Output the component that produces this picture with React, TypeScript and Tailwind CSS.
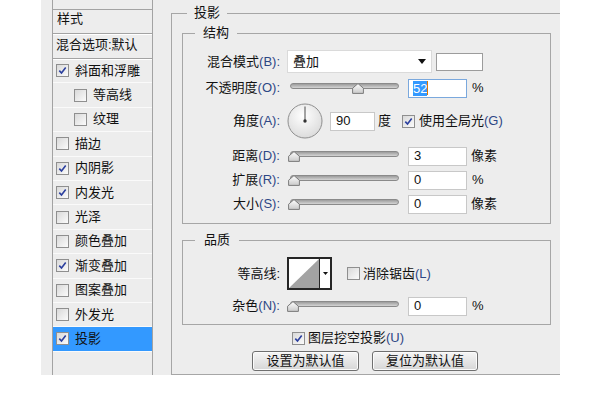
import React from 'react';

type Item = { t: string; c?: boolean; i?: boolean; a?: boolean };

const items: Item[] = [
  { t: '斜面和浮雕', c: true },
  { t: '等高线', i: true },
  { t: '纹理', i: true },
  { t: '描边' },
  { t: '内阴影', c: true },
  { t: '内发光', c: true },
  { t: '光泽' },
  { t: '颜色叠加' },
  { t: '渐变叠加', c: true },
  { t: '图案叠加' },
  { t: '外发光' },
  { t: '投影', c: true, a: true },
];

const M = ({ children }: { children: React.ReactNode }) => (
  <span className="text-[#2d4785]">{children}</span>
);

const Check = ({ checked, className = '' }: { checked?: boolean; className?: string }) => (
  <span
    className={`flex h-[13px] w-[13px] shrink-0 items-center justify-center border border-[#8f8f8f] bg-linear-to-br from-[#d9d9d9] to-[#fbfbfb] ${className}`}
  >
    {checked && (
      <svg width="9" height="9" viewBox="0 0 9 9">
        <path d="M1.3 4.6 L3.5 7 L7.7 1.6" fill="none" stroke="#2b3f9e" strokeWidth="1.6" />
      </svg>
    )}
  </span>
);

const Label = ({ children }: { children: React.ReactNode }) => (
  <span className="w-[97px] shrink-0 text-right">{children}</span>
);

const Slider = ({ thumb }: { thumb: string }) => (
  <div className="relative ml-[7px] h-[20px] w-[113px] shrink-0">
    <div className="absolute left-[3px] right-[1px] top-[5px] h-[6px] rounded-full border border-[#8a8a8a] bg-linear-to-b from-[#9c9c9c] to-[#d4d4d4]" />
    <svg className={`absolute top-[5px] ${thumb}`} width="12" height="11" viewBox="0 0 12 11">
      <defs>
        <linearGradient id="tg" x1="0" y1="0" x2="0" y2="1">
          <stop offset="0" stopColor="#ffffff" />
          <stop offset="1" stopColor="#c9c9c9" />
        </linearGradient>
      </defs>
      <path d="M6 0.6 L11.4 5.2 V10.4 H0.6 V5.2 Z" fill="url(#tg)" stroke="#7b7b7b" />
    </svg>
  </div>
);

const Field = ({ children, w = 'w-[59px]', ml = 'ml-[8px]' }: { children: React.ReactNode; w?: string; ml?: string }) => (
  <div className={`flex h-[19px] shrink-0 items-center border border-[#c8c8c8] bg-white pl-[5px] ${w} ${ml}`}>
    {children}
  </div>
);

const Button = ({ children, w }: { children: React.ReactNode; w: string }) => (
  <div
    className={`flex h-[20px] items-center justify-center rounded-[3px] border border-[#6f6f6f] bg-linear-to-b from-[#f6f6f6] to-[#d6d6d6] shadow-[inset_0_0_0_1px_#fbfbfb] ${w}`}
  >
    {children}
  </div>
);

const LeftPanel = () => (
  <div className="ml-[11px] flex w-[101px] shrink-0 flex-col border-x border-[#a3a3a3]">
    <div className="h-[9px]" />
    <div className="h-[25px] border-y border-[#a3a3a3] pl-[4px]">样式</div>
    <div className="h-[25px] border-b border-[#a3a3a3] pl-[3px] pt-[2px] shadow-[inset_0_1px_0_#fff]">混合选项:默认</div>
    <div className="shadow-[inset_0_1px_0_#fff]">
      {items.map((it) => (
        <div
          key={it.t}
          className={`flex h-[24.4px] items-center gap-[6px] border-b border-[#fafafa] ${it.i ? 'pl-[21px]' : 'pl-[3px]'} ${it.a ? 'bg-[#3399ff]' : ''}`}
        >
          <Check checked={it.c} />
          <span>{it.t}</span>
        </div>
      ))}
    </div>
  </div>
);

export default function App() {
  return (
    <div className="flex h-[395px] w-[595px] bg-white font-['Liberation_Sans','Noto_Sans_CJK_SC',sans-serif] text-[13px] leading-[18px] text-[#111]">
      <div className="ml-[41px] flex h-[375px] w-[519px] overflow-hidden bg-[#ededed]">
        <LeftPanel />

        {/* 投影 */}
        <fieldset className="ml-[18px] mt-[4px] w-[400px] shrink-0 border border-[#a6a6a6] p-0">
          <legend className="ml-[15px] px-[7px] leading-[18px]">投影</legend>
          <div className="pb-[12px] pl-[10px] pt-[2px]">
            {/* 结构 */}
            <fieldset className="w-[369px] border border-[#a6a6a6] p-0">
              <legend className="ml-[12px] px-[8px] leading-[18px]">结构</legend>
              <div className="pb-[9px] pt-[7px]">
                <div className="flex h-[25px] items-center">
                  <Label>混合模式<M>(B):</M></Label>
                  <div className="ml-[7px] flex h-[23px] w-[145px] shrink-0 items-center justify-between border border-[#dadada] bg-white pl-[5px] pr-[5px]">
                    <span>叠加</span>
                    <svg width="8" height="5" viewBox="0 0 8 5">
                      <path d="M0 0 H8 L4 5 Z" fill="#111" />
                    </svg>
                  </div>
                  <div className="ml-[4px] h-[18px] w-[47px] shrink-0 border border-[#9c9c9c] bg-white" />
                </div>

                <div className="mt-[4px] flex h-[20px] items-center">
                  <Label>不透明度<M>(O):</M></Label>
                  <Slider thumb="left-[65px]" />
                  <div className="ml-[8px] flex h-[19px] w-[59px] shrink-0 items-center border border-[#7aa8dd] bg-white pl-[4px]">
                    <span className="bg-[#3399ff] leading-[15px] text-white">52</span>
                    <span className="h-[14px] w-px bg-[#e07800]" />
                  </div>
                  <span className="ml-[5px]">%</span>
                </div>

                <div className="mt-[5px] flex h-[36px] items-center">
                  <Label>角度<M>(A):</M></Label>
                  <svg className="ml-[7px] shrink-0" width="36" height="36" viewBox="0 0 36 36">
                    <defs>
                      <radialGradient id="dg" cx="45%" cy="35%" r="70%">
                        <stop offset="0" stopColor="#ffffff" />
                        <stop offset="1" stopColor="#d9d9d9" />
                      </radialGradient>
                    </defs>
                    <circle cx="18" cy="18" r="17" fill="url(#dg)" stroke="#8f8f8f" />
                    <line x1="18" y1="18" x2="18" y2="3.5" stroke="#4a4a4a" />
                    <circle cx="18" cy="18" r="1.7" fill="#333" />
                  </svg>
                  <Field w="w-[45px]" ml="ml-[7px]">90</Field>
                  <span className="ml-[3px]">度</span>
                  <Check checked className="ml-[11px]" />
                  <span className="ml-[4px]">使用全局光<M>(G)</M></span>
                </div>

                <div className="mt-[7px] flex h-[20px] items-center">
                  <Label>距离<M>(D):</M></Label>
                  <Slider thumb="left-[1px]" />
                  <Field>3</Field>
                  <span className="ml-[4px]">像素</span>
                </div>

                <div className="mt-[4px] flex h-[20px] items-center">
                  <Label>扩展<M>(R):</M></Label>
                  <Slider thumb="left-[1px]" />
                  <Field>0</Field>
                  <span className="ml-[5px]">%</span>
                </div>

                <div className="mt-[4px] flex h-[20px] items-center">
                  <Label>大小<M>(S):</M></Label>
                  <Slider thumb="left-[1px]" />
                  <Field>0</Field>
                  <span className="ml-[4px]">像素</span>
                </div>
              </div>
            </fieldset>

            {/* 品质 */}
            <fieldset className="mt-[7px] w-[369px] border border-[#a6a6a6] p-0">
              <legend className="ml-[12px] px-[9px] leading-[18px]">品质</legend>
              <div className="pb-[8px] pt-[8px]">
                <div className="flex h-[33px] items-center">
                  <Label>等高线:</Label>
                  <div className="ml-[7px] flex h-[33px] w-[45px] shrink-0 border-2 border-[#262626] bg-white">
                    <svg width="30" height="29" viewBox="0 0 30 29" className="shrink-0">
                      <polygon points="0,29 30,0 30,29" fill="#a3a3a3" />
                    </svg>
                    <div className="flex flex-1 items-center justify-center border-l border-[#262626]">
                      <svg width="5" height="3" viewBox="0 0 5 3">
                        <path d="M0 0 H5 L2.5 3 Z" fill="#111" />
                      </svg>
                    </div>
                  </div>
                  <Check className="ml-[15px]" />
                  <span className="ml-[3px]">消除锯齿<M>(L)</M></span>
                </div>

                <div className="mt-[6px] flex h-[20px] items-center">
                  <Label>杂色<M>(N):</M></Label>
                  <Slider thumb="left-[0px]" />
                  <Field>0</Field>
                  <span className="ml-[5px]">%</span>
                </div>
              </div>
            </fieldset>

            <div className="mt-[5px] flex h-[16px] items-center pl-[110px]">
              <Check checked />
              <span className="ml-[3px]">图层挖空投影<M>(U)</M></span>
            </div>

            <div className="mt-[5px] flex gap-[13px] pl-[70px]">
              <Button w="w-[107px]">设置为默认值</Button>
              <Button w="w-[106px]">复位为默认值</Button>
            </div>
          </div>
        </fieldset>
      </div>
    </div>
  );
}
